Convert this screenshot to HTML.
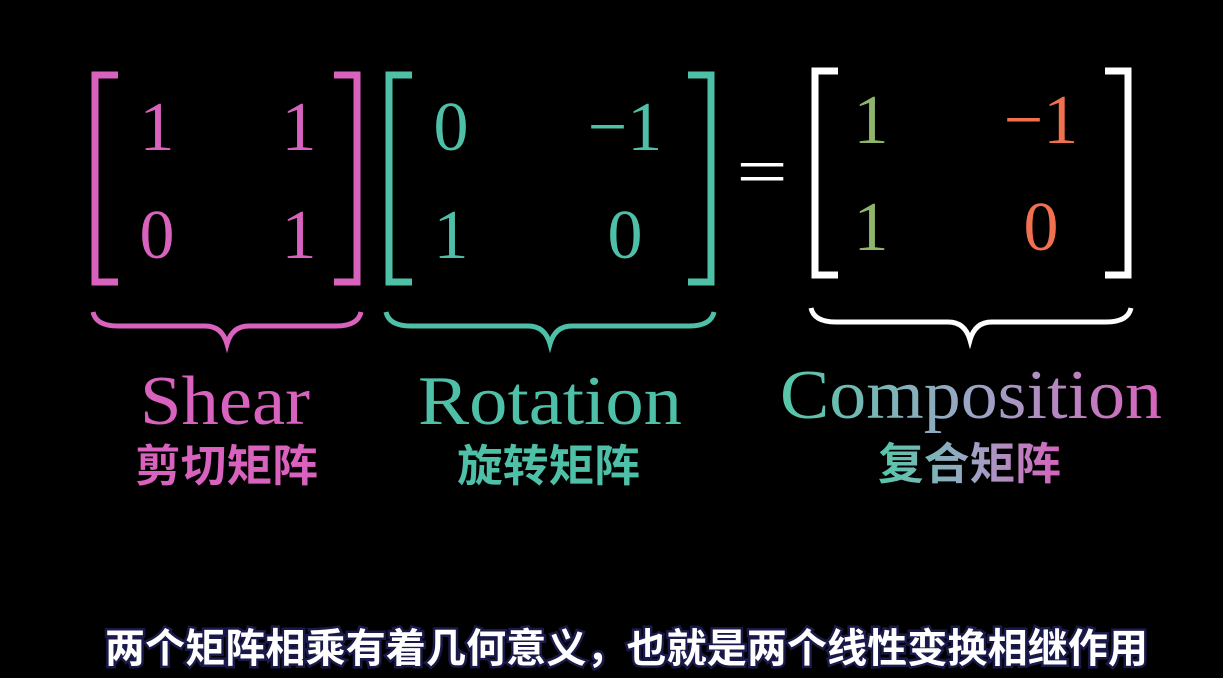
<!DOCTYPE html>
<html><head><meta charset="utf-8"><style>
html,body{margin:0;padding:0;background:#000;width:1223px;height:678px;overflow:hidden}
svg{display:block}
.n{font-family:"Liberation Serif",serif;font-size:70px}
.l{font-family:"Liberation Serif",serif;font-size:70px}
.c{font-family:"Liberation Sans","Noto Sans CJK SC",sans-serif;font-weight:bold;font-size:44px}
.s{font-family:"Liberation Sans","Noto Sans CJK SC",sans-serif;font-weight:bold;font-size:40px;fill:#fff;stroke:#1a1a4a;stroke-width:5px;paint-order:stroke}
</style></head><body>
<svg width="1223" height="678" viewBox="0 0 1223 678">
<defs><linearGradient id="g" x1="0" x2="1"><stop offset="0" stop-color="#55c7a8"/><stop offset="0.5" stop-color="#9aa6c4"/><stop offset="1" stop-color="#d862bd"/></linearGradient></defs>
<g fill="none" stroke-width="7" stroke-linecap="butt">
<path d="M118 75H95V282H118M334 75H357V282H334" stroke="#d862bd"/>
<path d="M412 75H389V282H412M688 75H711V282H688" stroke="#4fc0a8"/>
<path d="M838 71H815V275H838M1105 71H1128V275H1105" stroke="#fff"/>
</g>
<g fill="none" stroke-width="5">
<path d="M93 312Q96 326 118 326H205Q222 326 227 344Q232 326 249 326H336Q358 326 361 312" stroke="#d862bd"/>
<path d="M386 312Q389 326 411 326H528Q545 326 550 344Q555 326 572 326H689Q711 326 714 312" stroke="#4fc0a8"/>
<path d="M811 308Q814 322 836 322H948Q965 322 970 340Q975 322 992 322H1106Q1128 322 1131 308" stroke="#fff"/>
</g>
<g class="n" fill="#d862bd" text-anchor="middle">
<text x="157" y="150">1</text><text x="299" y="150">1</text>
<text x="157" y="258">0</text><text x="299" y="258">1</text></g>
<g class="n" fill="#4fc0a8" text-anchor="middle">
<text x="451" y="150">0</text><text x="625" y="150">−1</text>
<text x="451" y="258">1</text><text x="625" y="258">0</text></g>
<text class="n" x="762" y="195" fill="#fff" text-anchor="middle" transform="translate(762 0) scale(1.3 1) translate(-762 0)">=</text>
<g class="n" text-anchor="middle">
<text x="871" y="143" fill="#8fb56c">1</text><text x="1041" y="143" fill="#f0704f">−1</text>
<text x="871" y="250" fill="#8fb56c">1</text><text x="1041" y="250" fill="#f0704f">0</text></g>
<text class="l" x="140" y="424" textLength="170" lengthAdjust="spacingAndGlyphs" fill="#d862bd">Shear</text>
<text class="l" x="418" y="424" textLength="264" lengthAdjust="spacingAndGlyphs" fill="#4fc0a8">Rotation</text>
<text class="l" x="780" y="418" textLength="382" lengthAdjust="spacingAndGlyphs" fill="url(#g)">Composition</text>
<text class="c" x="135" y="481" textLength="183" lengthAdjust="spacingAndGlyphs" fill="#d862bd">剪切矩阵</text>
<text class="c" x="457" y="481" textLength="183" lengthAdjust="spacingAndGlyphs" fill="#4fc0a8">旋转矩阵</text>
<text class="c" x="878" y="479" textLength="183" lengthAdjust="spacingAndGlyphs" fill="url(#g)">复合矩阵</text>
<text class="s" x="105" y="662" textLength="1043">两个矩阵相乘有着几何意义，也就是两个线性变换相继作用</text>
</svg>
</body></html>
